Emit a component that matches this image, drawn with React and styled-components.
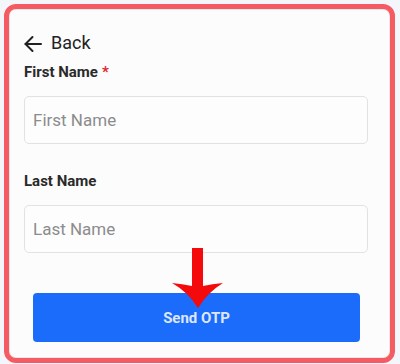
import React from 'react'
import styled, { createGlobalStyle } from 'styled-components'

const GlobalStyle = createGlobalStyle`
  html, body {
    margin: 0;
    padding: 0;
    background: #f3f6fb;
    font-family: Roboto, "Liberation Sans", Arial, sans-serif;
  }
`;

const Page = styled.div`
  width: 400px;
  height: 364px;
  padding: 4px 5px 0 4px;
  box-sizing: border-box;
`;

const Card = styled.div`
  position: relative;
  height: 359px;
  box-sizing: border-box;
  border: 5px solid #f65b63;
  border-radius: 12px;
  background: #fcfcfc;
  box-shadow: inset 0 0 0 1px #e9e9e9;
  padding: 21px 21px 0 15px;
  display: flex;
  flex-direction: column;
`;

const BackRow = styled.div`
  display: flex;
  align-items: center;
  gap: 9px;
  height: 24px;
  font-size: 18px;
  color: #222;
`;

const Label = styled.div`
  margin-top: ${p => p.$top}px;
  line-height: 18px;
  font-size: 15px;
  font-weight: 700;
  color: #2a2a2a;
`;

const Star = styled.span`
  color: #e0262f;
  margin-left: 4px;
`;

const Input = styled.input`
  margin-top: 15px;
  height: 48px;
  width: 344px;
  box-sizing: border-box;
  border: 1px solid #e2e2e2;
  border-radius: 5px;
  background: #fdfdfd;
  padding: 0 8px;
  font-family: inherit;
  font-size: 17px;
  outline: none;

  &::placeholder {
    color: #8c8c8c;
  }
`;

const Button = styled.button`
  margin: 40px 0 0 9px;
  width: 327px;
  height: 49px;
  border: none;
  border-radius: 4px;
  background: #1c6cfb;
  color: #dde7fc;
  font-family: inherit;
  font-size: 15px;
  font-weight: 700;
  cursor: pointer;
`;

// red annotation arrow drawn over the button
const Pointer = styled.svg`
  position: absolute;
  left: 161px;
  top: 237px;
`;

const BackArrow = () => (
  <svg width="18" height="18" viewBox="0 0 18 18" fill="none" stroke="#222" strokeWidth="2" strokeLinecap="round" strokeLinejoin="round" style={{ marginTop: 4 }}>
    <path d="M17 9H1.5" />
    <path d="M8.5 2L1.5 9l7 7" />
  </svg>
);

export default function App() {
  return (
    <>
      <GlobalStyle />
      <Page>
        <Card>
          <BackRow>
            <BackArrow />
            <span>Back</span>
          </BackRow>
          <Label $top={9}>First Name<Star>*</Star></Label>
          <Input placeholder="First Name" />
          <Label $top={28}>Last Name</Label>
          <Input placeholder="Last Name" />
          <Button>Send OTP</Button>
          <Pointer width="56" height="66" viewBox="0 0 56 66">
            <path
              d="M22 2H33V40Q42 38 53 37Q38 46 28 62Q18 46 2 37Q12 38 22 40Z"
              fill="#f40a0a"
            />
          </Pointer>
        </Card>
      </Page>
    </>
  );
}
